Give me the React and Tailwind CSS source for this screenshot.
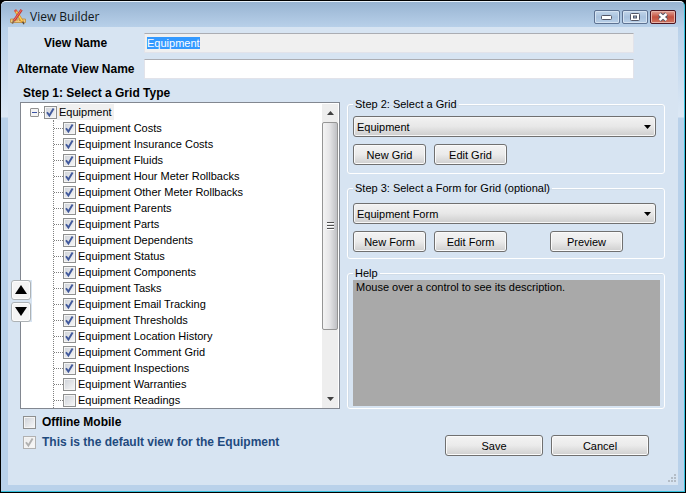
import { useEffect, useRef, useState } from "react";

const GRIDS = [
  ["Costs", true], ["Insurance Costs", true], ["Fluids", true], ["Hour Meter Rollbacks", true],
  ["Other Meter Rollbacks", true], ["Parents", true], ["Parts", true], ["Dependents", true],
  ["Status", true], ["Components", true], ["Tasks", true], ["Email Tracking", true],
  ["Thresholds", true], ["Location History", true], ["Comment Grid", true],
  ["Inspections", true], ["Warranties", false], ["Readings", false],
];

function Tick({ checked = false, disabled = false }) {
  const [on, setOn] = useState(checked);
  return (
    <span className="grid size-[13px] shrink-0">
      <input
        type="checkbox"
        checked={on}
        disabled={disabled}
        onChange={() => setOn(!on)}
        className="col-start-1 row-start-1 m-0 size-[13px] appearance-none border border-[#8e8f8f] bg-linear-to-br from-[#cdd1d8] to-[#f8f8f8] shadow-[inset_0_0_0_1px_#f4f4f4] disabled:border-[#b1b1b1] disabled:from-[#ececec]"
      />
      {on && (
        <svg viewBox="0 0 13 13" className={"pointer-events-none col-start-1 row-start-1 size-[13px] " + (disabled ? "text-[#b0b0b0]" : "text-[#41599c]")}>
          <path d="M3 6.2 L5.4 9.6 L9.6 2.6" fill="none" stroke="currentColor" strokeWidth="1.9" />
        </svg>
      )}
    </span>
  );
}

function Button({ children, className = "" }) {
  return (
    <button className={"h-[21px] rounded-[3px] border border-[#707070] bg-linear-to-b from-[#f3f3f3] from-0% via-[#ebebeb] via-49% to-[#cfcfcf] text-[11px] leading-[14px] shadow-[inset_0_0_0_1px_#fafafa] " + className}>
      {children}
    </button>
  );
}

function Select({ label, value }) {
  return (
    <div className="grid">
      <select
        aria-label={label}
        className="col-start-1 row-start-1 h-[21px] w-full appearance-none rounded-[3px] border border-[#707070] bg-linear-to-b from-[#f2f2f2] from-0% via-[#e8e8e8] via-49% to-[#cdcdcd] px-[3px] text-[11px] leading-[14px] shadow-[inset_0_0_0_1px_#f6f6f6]"
      >
        <option>{value}</option>
      </select>
      <svg viewBox="0 0 7 4" className="pointer-events-none col-start-1 row-start-1 mr-[5px] h-1 w-[7px] self-center justify-self-end">
        <path d="M0 0h7L3.5 4z" />
      </svg>
    </div>
  );
}

function Group({ title, children, className = "" }) {
  return (
    <fieldset className={"min-w-0 rounded-[3px] border border-white shadow-[inset_1px_1px_0_#d0dce8] " + className}>
      <legend className="px-0.5 leading-[14px]">{title}</legend>
      {children}
    </fieldset>
  );
}

function Caption() {
  const box = "grid h-[14px] w-[26px] place-items-center rounded-[2px] border border-[#5d7292] bg-linear-to-b from-[#c3d6ea] via-[#a9c2de] via-50% to-[#b9d0e8] shadow-[inset_0_0_0_1px_#d5e3f2]";
  return (
    <header className="flex h-[25px] items-center gap-1 pl-0.5 pr-0.5 pt-[5px]">
      <svg viewBox="0 0 16 16" className="size-4">
        <path d="M.5 10h15v3.5H.5z" fill="#f0c880" stroke="#b98a3c" strokeWidth=".8" />
        <path d="M3 10.5v1.5M7 10.5v1.5M9.5 10.5v1.5" stroke="#a07020" strokeWidth=".6" />
        <path d="M5.5 1.5l7.2 11.5" stroke="#d98a20" strokeWidth="2.8" />
        <path d="M5.8 1.8l6.8 10.8" stroke="#fad35c" strokeWidth="1.3" />
        <path d="M5 .8l1.2 1.8" stroke="#d9584c" strokeWidth="2.6" />
        <path d="M12.6 12.6l1.4 2.6" stroke="#54453a" strokeWidth="1.3" />
        <path d="M11.6 .8L4 11.8" stroke="#c73a34" strokeWidth="2.6" />
        <path d="M11.3 1L4.2 11.2" stroke="#ec7468" strokeWidth="1" />
        <path d="M4 11.6l-1.8 3" stroke="#8a6a50" strokeWidth="1.8" />
      </svg>
      <h1 className="flex-1 font-['Open_Sans',sans-serif] text-[12px] leading-4 text-[#101820]">View Builder</h1>
      <div className="flex gap-0.5">
        <button aria-label="Minimize" className={box}>
          <svg viewBox="0 0 12 6" className="h-[6px] w-3"><rect x=".5" y="1.5" width="10" height="4" rx="1" fill="#fff" stroke="#535666" /></svg>
        </button>
        <button aria-label="Maximize" className={box}>
          <svg viewBox="0 0 10 8" className="h-2 w-[10px]"><rect x=".5" y=".5" width="9" height="7" rx="1" fill="#fff" stroke="#535666" /><rect x="3.5" y="3" width="3" height="2" fill="#a9c2de" stroke="#535666" /></svg>
        </button>
        <button aria-label="Close" className="grid h-[14px] w-[26px] place-items-center rounded-[2px] border border-[#4c1420] bg-linear-to-b from-[#e0a196] via-[#c4503f] via-50% to-[#cf7460] shadow-[inset_0_0_0_1px_#e8b3a8]">
          <svg viewBox="0 0 12 10" className="h-[10px] w-3"><path d="M2.5 2l7 6M9.5 2l-7 6" stroke="#535666" strokeWidth="4.4" /><path d="M2.5 2l7 6M9.5 2l-7 6" stroke="#fff" strokeWidth="2.4" /></svg>
        </button>
      </div>
    </header>
  );
}

function Scrollbar() {
  return (
    <div className="flex w-4 flex-col items-center bg-[#eeeeee]">
      <div className="grid h-[18px] w-full place-items-center">
        <svg viewBox="0 0 7 4" className="h-1 w-[7px]"><path d="M0 4h7L3.5 0z" fill="#404040" /></svg>
      </div>
      <div className="grid w-full flex-[208] place-items-center rounded-[2px] border border-[#959595] bg-linear-to-r from-[#f4f4f4] via-[#e6e6e8] via-45% to-[#bfc0c4]">
        <svg viewBox="0 0 7 8" className="h-2 w-[7px]"><path d="M0 .5h7M0 3.5h7M0 6.5h7" stroke="#505050" /><path d="M0 1.5h7M0 4.5h7M0 7.5h7" stroke="#fff" /></svg>
      </div>
      <div className="flex-[60]" />
      <div className="grid h-[18px] w-full place-items-center">
        <svg viewBox="0 0 7 4" className="h-1 w-[7px]"><path d="M0 0h7L3.5 4z" fill="#404040" /></svg>
      </div>
    </div>
  );
}

function Tree() {
  return (
    <div className="relative flex border border-[#828790] bg-white px-px pt-px">
      <div className="min-w-0 flex-1">
        <div className="flex h-4 items-center pl-2">
          <button aria-label="Collapse" className="grid size-[9px] place-items-center rounded-[1px] border border-[#919191] bg-[#f4f4f4]">
            <span className="h-px w-[5px] bg-[#3c53a4]" />
          </button>
          <span className="w-[5px] border-t border-dotted border-[#808080]" />
          <label className="flex items-center">
            <Tick checked />
            <span className="bg-[#f0f0f0] px-0.5 leading-4">Equipment</span>
          </label>
        </div>
        <ul className="ml-[31px] border-l border-dotted border-[#808080]">
          {GRIDS.map(([name, on]) => (
            <li key={name} className="flex h-4 items-center">
              <span className="w-[9px] border-t border-dotted border-[#808080]" />
              <label className="flex items-center gap-0.5">
                <Tick checked={on} />
                <span className="leading-4">Equipment {name}</span>
              </label>
            </li>
          ))}
        </ul>
      </div>
      <Scrollbar />
      <div className="absolute -left-[10px] top-[177px] flex flex-col gap-0.5 bg-[#d7e4f2] pr-px">
        {["M0 9h12L6 0z", "M0 0h12L6 9z"].map((d, i) => (
          <button key={d} aria-label={i ? "Move down" : "Move up"} className="grid size-5 place-items-center rounded-[3px] border border-[#adb2b5] bg-[#f4f4f4] shadow-[inset_0_0_0_1px_#fcfcfc]">
            <svg viewBox="0 0 12 10" className="h-[10px] w-3"><path d={d} /></svg>
          </button>
        ))}
      </div>
    </div>
  );
}

export default function App() {
  const viewName = useRef(null);
  useEffect(() => {
    viewName.current.focus();
    viewName.current.select();
  }, []);
  const field = "h-5 min-w-0 border border-[#e2e3ea] border-t-[#abadb3] px-0.5 text-[11px] leading-[14px] outline-none selection:bg-[#3399ff] selection:text-white";
  return (
    <div className="min-h-screen bg-black p-px font-['Liberation_Sans',Arial,sans-serif] text-[11px] leading-[14px] text-black">
      <div className="flex min-h-[calc(100vh-2px)] flex-col rounded-t-[5px] border-b border-r border-t border-b-[#35c0dc] border-r-[#35c0dc] border-t-[#e8f2fb] bg-[#b9d1ea] bg-[linear-gradient(#98b4d2,#b9d1ea_26px,#dce8f5_115px,#b9d1ea_116px)] pb-[6px] pl-[7px] pr-[6px]">
        <Caption />
        <main className="flex flex-1 flex-col bg-[#d7e4f2] pl-3 pr-[13px] pt-[6px]">
          <div className="-ml-3 mr-[31px] grid grid-cols-[128px_1fr] items-center gap-x-2 gap-y-[6px]">
            <label htmlFor="view" className="pl-[7px] text-center text-[12px] font-bold">View Name</label>
            <input id="view" ref={viewName} defaultValue="Equipment" className={field + " bg-[#f0f0f0]"} />
            <label htmlFor="alt" className="whitespace-nowrap pl-2 text-[12px] font-bold">Alternate View Name</label>
            <input id="alt" className={field + " bg-white"} />
          </div>
          <div className="grid grid-cols-[320fr_318fr] gap-x-[7px]">
            <h2 className="col-span-2 ml-[3px] mt-[6px] pb-px text-[12px] font-bold leading-4">Step 1: Select a Grid Type</h2>
            <Tree />
            <div className="-mt-[5px] flex flex-col gap-[7px]">
              <Group title="Step 2: Select a Grid" className="px-[5px] pb-2 pt-[5px]">
                <div className="mr-[3px]"><Select label="Grid" value="Equipment" /></div>
                <div className="mt-[7px] flex gap-2">
                  <Button className="w-[73px]">New Grid</Button>
                  <Button className="w-[73px]">Edit Grid</Button>
                </div>
              </Group>
              <Group title="Step 3: Select a Form for Grid (optional)" className="px-[5px] pb-[6px] pt-2">
                <div className="mr-[3px]"><Select label="Form" value="Equipment Form" /></div>
                <div className="mt-[7px] flex gap-2">
                  <Button className="w-[73px]">New Form</Button>
                  <Button className="w-[73px]">Edit Form</Button>
                  <Button className="ml-[35px] w-[73px]">Preview</Button>
                </div>
              </Group>
              <Group title="Help" className="flex flex-1 flex-col pb-0.5 pl-[5px] pr-1">
                <p className="flex-1 bg-[#a9a9a9] px-[3px]">Mouse over a control to see its description.</p>
              </Group>
            </div>
          </div>
          <div className="mt-[6px] flex justify-between pl-[3px] pr-4">
            <div className="flex flex-col gap-[6px] text-[12px] font-bold">
              <label className="flex items-center gap-[6px]"><Tick /> Offline Mobile</label>
              <label className="flex items-center gap-[6px] text-[#1f4a7e]"><Tick checked disabled /> This is the default view for the Equipment</label>
            </div>
            <div className="flex items-start gap-2 pt-5">
              <Button className="w-[98px]">Save</Button>
              <Button className="w-[98px]">Cancel</Button>
            </div>
          </div>
          <svg viewBox="0 0 9 9" className="-mr-3 mb-0.5 mt-auto size-[9px] self-end" fill="#b3bcc6">
            <path d="M6 0h2v2H6zM3 3h2v2H3zM6 3h2v2H6zM0 6h2v2H0zM3 6h2v2H3zM6 6h2v2H6z" />
          </svg>
        </main>
      </div>
    </div>
  );
}
